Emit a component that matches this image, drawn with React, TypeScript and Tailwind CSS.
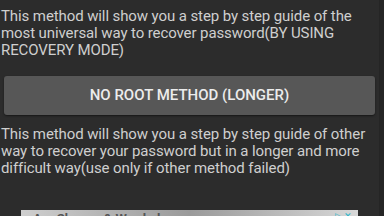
export default function App() {
  return (
    <div className="w-[384px] h-[216px] overflow-hidden bg-[#2c2c2c] flex" style={{ fontFamily: "Roboto, 'Liberation Sans', sans-serif" }}>
      <div className="w-[379px] flex flex-col pt-[8px]">
        <p className="shrink-0 text-[15px] leading-[17px] tracking-[-0.1px] text-[#cfcfcf] pl-[1px]">
          This method will show you a step by step guide of the most universal way to recover password(BY USING RECOVERY MODE)
        </p>
        <button className="shrink-0 mt-[17px] mx-[4px] h-[39px] rounded-[3px] bg-[#575757] text-[#ececec] text-[15px] font-medium flex items-center justify-center shadow-[0_1px_2px_rgba(0,0,0,0.5)]">
          NO ROOT METHOD (LONGER)
        </button>
        <p className="shrink-0 mt-[11px] text-[15px] leading-[17px] tracking-[-0.1px] text-[#cfcfcf] pl-[1px]">
          This method will show you a step by step guide of other way to recover your password but in a longer and more difficult way(use only if other method failed)
        </p>
        <div className="shrink-0 mt-[33px] mx-[21px] h-[12px] bg-gradient-to-r from-[#cfcfcf] via-[#9a9a9a] to-[#d8d8d8] relative overflow-hidden">
          <span className="absolute left-[12px] top-[2px] text-[13px] leading-[14px] font-bold text-[#555]">Are Shopee & Worded</span>
          <span className="absolute right-[6px] top-[1px] text-[9px] leading-[10px] text-[#2bb5c9]">▷ ✕</span>
        </div>
      </div>
      <div className="flex-1 bg-[#252525]" />
    </div>
  );
}
